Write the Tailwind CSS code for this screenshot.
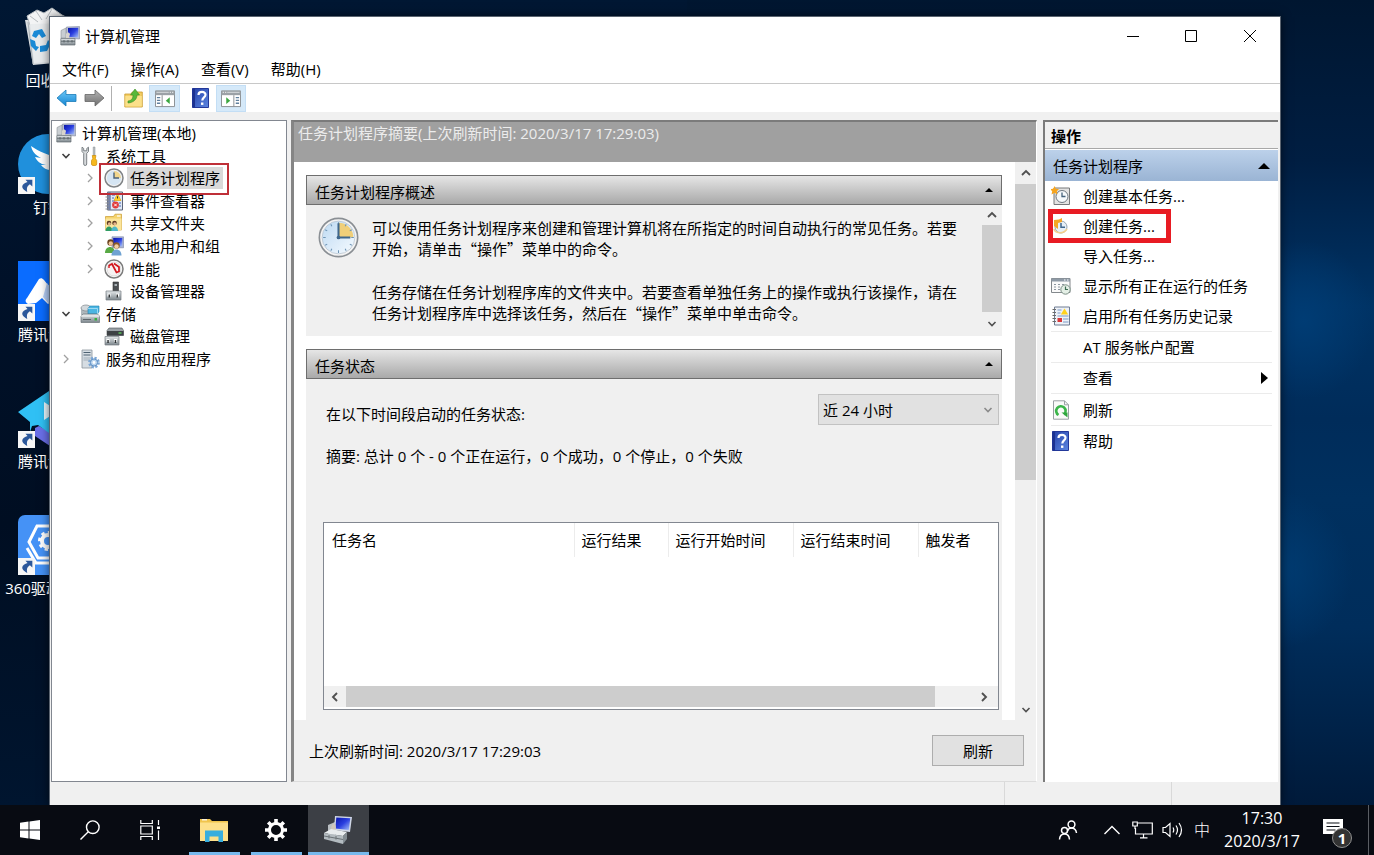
<!DOCTYPE html>
<html lang="zh-CN">
<head>
<meta charset="utf-8">
<title>计算机管理</title>
<script src="https://cdn.jsdelivr.net/npm/@tailwindcss/browser@4"></script>
</head>
<body class="flex h-screen flex-col overflow-hidden bg-[#001127] font-['Open_Sans','Noto_Sans_CJK_SC',sans-serif] text-[15px] leading-[22px] text-black">

<!-- Shared icon symbols -->
<svg class="absolute h-0 w-0" aria-hidden="true">
  <defs>
    <linearGradient id="gScreen" x1="0" y1="0" x2="1" y2="1"><stop offset="0" stop-color="#0a14a8"/><stop offset=".5" stop-color="#2a3fe0"/><stop offset="1" stop-color="#a9c4f8"/></linearGradient>
    <linearGradient id="gMetal" x1="0" y1="0" x2="0" y2="1"><stop offset="0" stop-color="#e4e8ea"/><stop offset="1" stop-color="#7c868c"/></linearGradient>
    <linearGradient id="gBlue" x1="0" y1="0" x2="0" y2="1"><stop offset="0" stop-color="#6cc8f8"/><stop offset="1" stop-color="#1485d2"/></linearGradient>
    <linearGradient id="gGray" x1="0" y1="0" x2="0" y2="1"><stop offset="0" stop-color="#b4b4b4"/><stop offset="1" stop-color="#6e6e6e"/></linearGradient>
    <linearGradient id="gFace" x1="0" y1="0" x2="1" y2="1"><stop offset="0" stop-color="#bcd9f2"/><stop offset="1" stop-color="#f6fbff"/></linearGradient>
    <linearGradient id="gHelp" x1="0" y1="0" x2="1" y2="1"><stop offset="0" stop-color="#2440a8"/><stop offset="1" stop-color="#5c86e0"/></linearGradient>
  </defs>
  <symbol id="mmc" viewBox="0 0 20 20">
    <path d="M1 4.500L6 2v10H1z" fill="#c9ced2" stroke="#8b9297" stroke-width=".6"/>
    <path d="M6.500 1L19.500.5v12.500L6.500 12z" fill="#b9bfd0" stroke="#8088a0" stroke-width=".6"/>
    <path d="M8 2l10.300-.3v9.800L8 10.700z" fill="url(#gScreen)"/>
    <path d="M6 8c1-2 3-2 4 0l-1 4H6z" fill="#d8d4cc"/>
    <path d="M.8 12.500h14.200V19H.8z" fill="url(#gMetal)" stroke="#666e74" stroke-width=".7"/>
    <path d="M1 15.200h14M4 14v2.500M8 14v2.500M12 14v2.500" stroke="#555d63" stroke-width=".9"/>
  </symbol>
  <symbol id="tools" viewBox="0 0 20 20">
    <path d="M2 1.200v4.300l1.700 1.800V18a1.500 1.500 0 0 0 3 0V7.300L8.500 5.500V1.200L6.800 2.400v2.400H3.700V2.400z" fill="#d7dadc" stroke="#70777c" stroke-width=".9"/>
    <path d="M13.200 1h1.800v9h-1.800z" fill="#b9bec2" stroke="#868c90" stroke-width=".5"/>
    <path d="M12.300 9.500h3.600l-.5 3 1.300 2V18a1.500 1.500 0 0 1-1.500 1.500h-2.300A1.500 1.500 0 0 1 11.500 18v-3.500l1.300-2z" fill="#f6b81e" stroke="#c98b07" stroke-width=".7"/>
  </symbol>
  <symbol id="clock" viewBox="0 0 40 40">
    <circle cx="20" cy="20" r="18.700" fill="#f4f4f4" stroke="#8a8f94" stroke-width="1.600"/>
    <circle cx="20" cy="20" r="16" fill="url(#gFace)" stroke="#b6c2cc" stroke-width=".7"/>
    <path d="M20 20V5.500A14.500 14.500 0 0 1 34.500 20z" fill="#f0cf79"/>
    <path d="M20 5v2.500M20 32.500V35M5 20h2.500M32.500 20H35M12.500 7l1 2M27.500 7l-1 2M7 12.500l2 1M7 27.500l2-1M12.500 33l1-2M27.500 33l-1-2M33 27.500l-2-1M33 12.500l-2 1" stroke="#6e94b4" stroke-width="1"/>
    <path d="M20 6v14h11.500" fill="none" stroke="#3f678c" stroke-width="2"/>
    <circle cx="20" cy="20" r="1.800" fill="#3f678c"/>
  </symbol>
  <symbol id="clockS" viewBox="0 0 20 20">
    <circle cx="10" cy="10" r="9" fill="#f2f2f2" stroke="#808487" stroke-width="1.500"/>
    <circle cx="10" cy="10" r="7.200" fill="#d5e5f3"/>
    <path d="M10 10V3a7 7 0 0 1 7 7z" fill="#f2d68c"/>
    <path d="M10 4.500V10h5" fill="none" stroke="#4d6378" stroke-width="1.400"/>
  </symbol>
  <symbol id="events" viewBox="0 0 20 20">
    <path d="M3.500 1h15v18h-15z" fill="#dfe8f6" stroke="#5c6478"/>
    <path d="M3.500 1h3.300v18H3.500z" fill="#7482a8"/>
    <path d="M1.500 3h3.500M1.500 6h3.500M1.500 9h3.500M1.500 12h3.500M1.500 15h3.500M1.500 18h3.500" stroke="#8d8d8d" stroke-width="1.200"/>
    <path d="M8 4h3M8 7h2M8 10h3M15 12h2M15 15h2" stroke="#4b69b0"/>
    <path d="M13.500 3l3.500 6.500h-7z" fill="#ffd324" stroke="#d89c00" stroke-width=".6"/>
    <path d="M13.500 5.300v2.200" stroke="#333"/>
    <circle cx="11.500" cy="14" r="3.400" fill="#e0393a"/><path d="M10.200 12.700l2.600 2.600m0-2.600l-2.600 2.600" stroke="#fff"/>
  </symbol>
  <symbol id="shared" viewBox="0 0 20 20">
    <path d="M1.500 3.500h8l1.500-2.300h6.500V17h-16z" fill="#f5d36c" stroke="#c89b2e" stroke-width=".7"/>
    <path d="M1.500 5.500h16V17h-16z" fill="#fbe59c"/>
    <path d="M13 3h3.500" stroke="#fff" stroke-width="1.200"/>
    <circle cx="5" cy="10" r="2.300" fill="#5b3b22"/><circle cx="5.400" cy="10.700" r="1.500" fill="#e4b48b"/>
    <circle cx="10.500" cy="10" r="2.300" fill="#5b3b22"/><circle cx="10.800" cy="10.700" r="1.500" fill="#e4b48b"/>
    <path d="M1.500 18c0-6 7-6 7 0z" fill="#2f9c63"/><path d="M7.300 18c0-6 6.700-6 6.700 0z" fill="#4fb8c8"/>
  </symbol>
  <symbol id="users" viewBox="0 0 20 20">
    <path d="M8 .8h11.500v11H8z" fill="#aab3cf" stroke="#7984a8" stroke-width=".6"/><path d="M9.200 2h9.100v8.300H9.200z" fill="url(#gScreen)"/>
    <circle cx="6.500" cy="6.500" r="3.200" fill="#6a421f"/><circle cx="6.800" cy="7.500" r="2.200" fill="#edc194"/>
    <path d="M1 17c0-8 10-8 10 0z" fill="#58a944"/>
    <circle cx="12.500" cy="9.500" r="3.200" fill="#8a5a28"/><circle cx="12.500" cy="10.500" r="2.200" fill="#f2cda2"/>
    <path d="M7.500 19.500c0-8 10-8 10 0z" fill="#6fa2d2"/>
  </symbol>
  <symbol id="perf" viewBox="0 0 20 20">
    <circle cx="10" cy="10" r="9" fill="#fff" stroke="#7c7c7c" stroke-width="1.500"/>
    <circle cx="10" cy="10" r="7" fill="#f6f2f2" stroke="#c9c9c9" stroke-width=".6"/>
    <path d="M5 6.500l3-1.500 4.500 8.500 2.500-1V8L10 4.500" fill="none" stroke="#d3151c" stroke-width="1.700"/><path d="M5 9V6" stroke="#d3151c" stroke-width="1.400"/>
  </symbol>
  <symbol id="device" viewBox="0 0 20 20">
    <path d="M9 1h5.500v9H9z" fill="#4b4f52" stroke="#333" stroke-width=".6"/><path d="M10.500 3h2.500v2h-2.500z" fill="#a8b0b4"/>
    <path d="M2 10h15v9H2z" fill="url(#gMetal)" stroke="#767d82" stroke-width=".7"/>
    <path d="M3.500 12.500h3v3h-3zM12 12.500h3v3h-3z" fill="#fff"/><path d="M4.500 13.500h1.500v3H4.500zM12.500 13.500H14v3h-1.500z" fill="#303436"/>
  </symbol>
  <symbol id="storage" viewBox="0 0 20 20">
    <path d="M1 4v7h10V4z" fill="#aeb7bc"/><ellipse cx="6" cy="4" rx="5" ry="3" fill="#d2d8dc" stroke="#7f878c" stroke-width=".7"/>
    <path d="M8 4.500L10 2h9v5.500L17.500 10H8z" fill="#4bb5e2" stroke="#1c7fae" stroke-width=".6"/><path d="M8 4.500h9.500V10" fill="none" stroke="#bfe8fa" stroke-width=".7"/>
    <path d="M1 12l2-2h14.500l2 2v6.500H1z" fill="url(#gMetal)" stroke="#6c7479" stroke-width=".7"/><path d="M1 12h18.500" stroke="#f3f5f6"/>
    <path d="M14.500 14h2.500v2.500h-2.500z" fill="#36b042"/><path d="M3 15.500h8" stroke="#5d656a"/>
  </symbol>
  <symbol id="disk" viewBox="0 0 20 20">
    <path d="M3 4.500L5 2h13l1.500 2.500v5H3z" fill="#9aa1a6" stroke="#4a5054" stroke-width=".6"/><path d="M3 5h16.500v4.500H3z" fill="#3d4144"/><path d="M14.500 7h3" stroke="#62e05e" stroke-width="1.200"/>
    <path d="M1 10.500h14V19H1z" fill="url(#gMetal)" stroke="#767d82" stroke-width=".7"/>
    <path d="M2.500 13h3v3h-3zM10 13h3v3h-3z" fill="#fff"/><path d="M3.300 14h1.500v3H3.300zM10.700 14h1.500v3h-1.500z" fill="#303436"/>
  </symbol>
  <symbol id="services" viewBox="0 0 20 20">
    <path d="M2 1h10v18H2z" fill="#d6dde3" stroke="#8a949c" stroke-width=".8"/>
    <path d="M3.500 3.500h7M3.500 6h7" stroke="#4e6272" stroke-width="1.200"/><path d="M3.500 9h7M3.500 11h7" stroke="#a3afb9"/>
    <circle cx="14" cy="13.500" r="4.600" fill="none" stroke="#7ba7d6" stroke-width="2.600" stroke-dasharray="2.100 1.500"/>
    <circle cx="14" cy="13.500" r="3.600" fill="#b9d4ee" stroke="#5f8fc4"/><circle cx="14" cy="13.500" r="1.400" fill="#fff"/>
  </symbol>
  <symbol id="help" viewBox="0 0 20 20">
    <path d="M1.500.5h16v19h-16z" fill="url(#gHelp)" stroke="#23389a"/><path d="M1.500.5H4v19H1.500z" fill="#1c3190"/>
    <path d="M7.500 7c0-4 7-4 7-.3 0 2.800-3.200 2.600-3.200 5.800" fill="none" stroke="#fff" stroke-width="2.200"/><path d="M10 14.500h2.400v2.400H10z" fill="#fff"/>
  </symbol>
  <symbol id="panel" viewBox="0 0 22 20">
    <path d="M1 2h20v16.500H1z" fill="#fff" stroke="#8a8e92"/><path d="M1 2h20v4.500H1z" fill="#9ba1a6"/><path d="M2 3.500h13" stroke="#d9dcde"/><path d="M16 3.500h1.200M18.500 3.500h1.200" stroke="#fff"/>
    <path d="M2.500 9h3.500M2.500 12h3.500M2.500 15h3.500" stroke="#5f7f9d" stroke-width="1.400"/>
    <path d="M8 6.500v12" stroke="#8a8e92"/><path d="M16 8.800v7L11.800 12.300z" fill="#3ca640"/>
  </symbol>
  <symbol id="chevR" viewBox="0 0 8 12"><path d="M2 2l4 4-4 4" fill="none" stroke="currentColor" stroke-width="1.300"/></symbol>
  <symbol id="chevRB" viewBox="0 0 8 12"><path d="M2 2l4 4-4 4" fill="none" stroke="currentColor" stroke-width="1.900"/></symbol>
  <symbol id="chevD" viewBox="0 0 12 8"><path d="M2.500 2L6 5.500 9.500 2" fill="none" stroke="currentColor" stroke-width="1.600"/></symbol>
  <symbol id="chevU" viewBox="0 0 12 8"><path d="M2 6l4-4 4 4" fill="none" stroke="currentColor" stroke-width="1.800"/></symbol>
  <symbol id="shortcut" viewBox="0 0 16 16"><path d="M0 0h16v16H0z" fill="#f6f6f6"/><path d="M7 2.500h6.500V9l-2.300-2.200C8.500 8.500 8 10.500 8.700 14c-2-1-4.700-2.500-4.700-5 0-2 2.500-3.600 5-4.300z" fill="#2b579a"/></symbol>
</svg>

<!-- Desktop -->
<main class="relative min-h-0 flex-1 overflow-hidden bg-[linear-gradient(180deg,#001630_0%,#001e42_20%,#003365_38%,#002c5a_52%,#00305f_62%,#002d5b_78%,#001a3a_100%)]">
  <div class="absolute inset-y-0 left-0 w-1/2 bg-[linear-gradient(180deg,#001733_0%,#001129_35%,#000e22_65%,#00152f_100%)]"></div>
  <div class="absolute top-[240px] right-0 h-[160px] w-[140px] bg-[radial-gradient(ellipse,#003c74_0%,#003c7400_70%)]"></div>
  <div class="absolute top-[490px] right-[20px] h-[160px] w-[160px] bg-[radial-gradient(ellipse,#003d74_0%,#003d7400_70%)]"></div>

  <!-- Desktop shortcuts -->
  <ul class="absolute top-[7px] left-0 w-24 text-center text-white">
    <li class="h-[127px]">
      <svg class="mx-auto h-[60px] w-[60px]" viewBox="0 0 60 60" aria-hidden="true">
        <path d="M7 13l46-2-6 44-32 3z" fill="#d9dde0"/>
        <path d="M9 9l10-6 7 3 8-5 10 7 8 4-4 6H12z" fill="#f3f4f5" stroke="#b9bec2"/>
        <path d="M18 4l6 9M34 2l-6 10M12 9l8 6" stroke="#b7bcc0"/>
        <path d="M10 15l5 42" stroke="#a9b0b5"/><path d="M12 17l38-1-5 38-29 2z" fill="#e9ecee"/>
        <path d="M16 24l8-2 4 7-4 2-3-4-3 4-4-2z" fill="#1a8ad6"/><path d="M12 32l5 2 1 5 3 1-3 4-5-5z" fill="#1a8ad6"/><path d="M22 39l6-1 2-5 3 3-4 8-7 1z" fill="#1a8ad6"/>
      </svg>
      <span class="mt-[2px] block">回收站</span>
    </li>
    <li class="h-[127px]">
      <svg class="mx-auto h-[60px] w-[60px]" viewBox="0 0 60 60" aria-hidden="true">
        <circle cx="30" cy="30" r="30" fill="#2090dc"/>
        <path d="M13 12c8 6 18 9 30 13-2 9-7 13-12 20l2-9c-4 0-8-2-10-5h5c-6-1-9-4-11-8l6 1c-6-3-9-7-10-12z" fill="#fff"/>
        <use href="#shortcut" x="0" y="43" width="17" height="17"/>
      </svg>
      <span class="mt-[2px] block">钉钉</span>
    </li>
    <li class="h-[127px]">
      <svg class="mx-auto h-[60px] w-[60px]" viewBox="0 0 60 60" aria-hidden="true">
        <path d="M0 0h60v60H0z" fill="#0a6cff"/>
        <path d="M21 18c2-1 3-1 5 1l12 15-8 9-6-6-6 5-8 1c-3-2-3-4-1-6z" fill="#fff"/><path d="M25 36l6 7 7-9-9-12z" fill="#b5cff8"/>
        <use href="#shortcut" x="0" y="43" width="17" height="17"/>
      </svg>
      <span class="mt-[2px] block">腾讯会议</span>
    </li>
    <li class="h-[127px]">
      <svg class="mx-auto h-[60px] w-[60px]" viewBox="0 0 60 60" aria-hidden="true">
        <path d="M17 40l4-2 14 8 14-10v9L32 58 17 48z" fill="#6a6fe8"/>
        <path d="M0 24L31 3l29 21-16 13-13 8-11-8-6 1-2 6v-10z" fill="#30c0f4"/>
        <path d="M26 14l14 9-14 9z" fill="#eaf8fe"/>
        <use href="#shortcut" x="0" y="43" width="17" height="17"/>
      </svg>
      <span class="mt-[2px] block">腾讯课堂</span>
    </li>
    <li class="h-[127px]">
      <svg class="mx-auto h-[60px] w-[60px]" viewBox="0 0 60 60" aria-hidden="true">
        <rect width="60" height="60" rx="7" fill="#4592f6"/>
        <path d="M11 27L19 11h22l8 16-8 16H20z" fill="none" stroke="#fff" stroke-width="3"/><path d="M9 33l9 15h24l9-15" fill="none" stroke="#fff" stroke-width="3"/>
        <circle cx="30" cy="26" r="6" fill="none" stroke="#fff" stroke-width="4"/><circle cx="30" cy="26" r="8.500" fill="none" stroke="#fff" stroke-width="3" stroke-dasharray="3.300 3.300"/>
        <use href="#shortcut" x="0" y="43" width="17" height="17"/>
      </svg>
      <span class="mt-[2px] block whitespace-nowrap">360驱动大师</span>
    </li>
  </ul>

  <!-- Computer Management window -->
  <section class="absolute top-[17px] right-[94px] bottom-0 left-[50px] flex flex-col bg-[#f0f0f0] shadow-[0_0_0_1px_#5a6470,0_0_10px_#000000b0]">
    <header class="flex h-[37px] shrink-0 items-center bg-white pl-[10px]">
      <svg class="h-5 w-5" aria-hidden="true"><use href="#mmc"/></svg>
      <h1 class="ml-[5px] flex-1">计算机管理</h1>
      <button aria-label="最小化" class="flex h-full w-[58px] items-center justify-center"><svg class="h-3 w-3" viewBox="0 0 12 12"><path d="M0 6.500h12" stroke="#000"/></svg></button>
      <button aria-label="最大化" class="flex h-full w-[58px] items-center justify-center"><svg class="h-3 w-3" viewBox="0 0 12 12"><path d="M.5.5h11v11H.5z" fill="none" stroke="#000"/></svg></button>
      <button aria-label="关闭" class="flex h-full w-[60px] items-center justify-center"><svg class="h-3 w-3" viewBox="0 0 12 12"><path d="M0 0l12 12M12 0L0 12" stroke="#000"/></svg></button>
    </header>
    <nav class="flex h-[30px] shrink-0 items-center border-b border-[#c8c8c8] bg-white pl-px">
      <button class="px-[11px]">文件(F)</button>
      <button class="px-[11px]">操作(A)</button>
      <button class="px-[11px]">查看(V)</button>
      <button class="px-[11px]">帮助(H)</button>
    </nav>
    <div class="flex h-[28px] shrink-0 items-center bg-white pl-[6px]">
      <button aria-label="后退" class="mr-[7px]"><svg class="h-[18px] w-[21px]" viewBox="0 0 21 18"><path d="M1 9l9-8v4.500h10v7H10V17z" fill="url(#gBlue)" stroke="#1b7bb8" stroke-width=".8"/></svg></button>
      <button aria-label="前进"><svg class="h-[18px] w-[21px]" viewBox="0 0 21 18"><path d="M20 9l-9-8v4.500H1v7h10V17z" fill="url(#gGray)" stroke="#666" stroke-width=".8"/></svg></button>
      <span class="mx-[6px] h-[25px] w-px bg-[#b0b0b0]"></span>
      <button aria-label="向上" class="mx-[6px]"><svg class="h-[20px] w-[19px]" viewBox="0 0 19 20"><path d="M.8 6h6l1.500-2h10v15H.8z" fill="#f3cd62" stroke="#c99a2f" stroke-width=".8"/><path d="M1.300 8h16.500v10.500H1.300z" fill="#fbe08a"/><path d="M4 13c4-.5 5-3 5-6H6.500L11 1l4.500 6H13c0 4-3 7.500-9 8z" fill="#58b83a" stroke="#3a8f22" stroke-width=".6"/></svg></button>
      <button aria-label="显示/隐藏控制台树" class="flex h-[27px] w-[31px] items-center justify-center border border-[#c3def5] bg-[#d5e9f9]"><svg class="h-[19px] w-[22px]"><use href="#panel"/></svg></button>
      <button aria-label="帮助" class="mr-[5px] ml-[11px]"><svg class="h-[20px] w-[20px]"><use href="#help"/></svg></button>
      <button aria-label="显示/隐藏操作窗格" class="flex h-[27px] w-[30px] items-center justify-center border border-[#c3def5] bg-[#d5e9f9]"><svg class="h-[19px] w-[22px] -scale-x-100"><use href="#panel"/></svg></button>
    </div>

    <div class="flex min-h-0 flex-1 pt-2 pr-[2px] pl-px">
      <!-- Console tree -->
      <aside class="relative w-[236px] shrink-0 border border-[#828790] bg-white">
        <ul class="grid h-[249px] auto-rows-fr pt-px">
          <li class="flex items-center gap-[6px] pl-1"><svg class="h-5 w-5"><use href="#mmc"/></svg><span>计算机管理(本地)</span></li>
          <li class="flex items-center gap-[6px] pl-[6px]"><svg class="h-2 w-4 text-[#404040]"><use href="#chevD"/></svg><svg class="h-5 w-5"><use href="#tools"/></svg><span>系统工具</span></li>
          <li class="flex items-center gap-[6px] pl-[30px]"><svg class="h-3 w-4 text-[#a0a0a0]"><use href="#chevR"/></svg><svg class="h-5 w-5"><use href="#clockS"/></svg><span class="-mx-[3px] bg-[#d9d9d9] px-[3px]">任务计划程序</span></li>
          <li class="flex items-center gap-[6px] pl-[30px]"><svg class="h-3 w-4 text-[#a0a0a0]"><use href="#chevR"/></svg><svg class="h-5 w-5"><use href="#events"/></svg><span>事件查看器</span></li>
          <li class="flex items-center gap-[6px] pl-[30px]"><svg class="h-3 w-4 text-[#a0a0a0]"><use href="#chevR"/></svg><svg class="h-5 w-5"><use href="#shared"/></svg><span>共享文件夹</span></li>
          <li class="flex items-center gap-[6px] pl-[30px]"><svg class="h-3 w-4 text-[#a0a0a0]"><use href="#chevR"/></svg><svg class="h-5 w-5"><use href="#users"/></svg><span>本地用户和组</span></li>
          <li class="flex items-center gap-[6px] pl-[30px]"><svg class="h-3 w-4 text-[#a0a0a0]"><use href="#chevR"/></svg><svg class="h-5 w-5"><use href="#perf"/></svg><span>性能</span></li>
          <li class="flex items-center gap-[6px] pl-[52px]"><svg class="h-5 w-5"><use href="#device"/></svg><span>设备管理器</span></li>
          <li class="flex items-center gap-[6px] pl-[6px]"><svg class="h-2 w-4 text-[#404040]"><use href="#chevD"/></svg><svg class="h-5 w-5"><use href="#storage"/></svg><span>存储</span></li>
          <li class="flex items-center gap-[6px] pl-[52px]"><svg class="h-5 w-5"><use href="#disk"/></svg><span>磁盘管理</span></li>
          <li class="flex items-center gap-[6px] pl-[6px]"><svg class="h-3 w-4 text-[#a0a0a0]"><use href="#chevR"/></svg><svg class="h-5 w-5"><use href="#services"/></svg><span>服务和应用程序</span></li>
        </ul>
        <div class="absolute top-[42px] left-[47px] h-[32px] w-[130px] border-2 border-[#bf2f38]"></div>
      </aside>

      <!-- Task Scheduler summary -->
      <section class="ml-1 flex min-w-0 flex-1 flex-col border-t-2 border-r border-b border-l-[3px] border-t-[#7b7b7b] border-r-white border-b-[#dcdcdc] border-l-[#858585]">
        <h2 class="h-10 shrink-0 bg-[#a0a0a0] pl-1 text-[#ececec]">任务计划程序摘要(上次刷新时间: 2020/3/17 17:29:03)</h2>
        <div class="flex min-h-0 flex-1">
          <div class="flex min-w-0 flex-1 flex-col bg-white pt-[13px] pr-[13px] pl-3">
            <h3 class="flex h-[30px] shrink-0 items-center justify-between border border-[#6e6e6e] bg-linear-to-b from-[#e6e6e6] to-[#a9a9a9] pt-1 pr-2 pl-2">任务计划程序概述<svg class="mb-1 h-1 w-2" viewBox="0 0 8 4"><path d="M0 4l4-4 4 4z"/></svg></h3>
            <div class="flex h-[131px] shrink-0 bg-[#f0f0f0] pl-3">
              <svg class="mt-3 h-[41px] w-[41px] shrink-0"><use href="#clock"/></svg>
              <div class="min-w-0 flex-1 overflow-hidden pt-3 pr-4 pl-[13px] font-['Noto_Sans_CJK_SC',sans-serif] leading-[21px]">
                <p>可以使用任务计划程序来创建和管理计算机将在所指定的时间自动执行的常见任务。若要开始，请单击“操作”菜单中的命令。</p>
                <p class="mt-[22px]">任务存储在任务计划程序库的文件夹中。若要查看单独任务上的操作或执行该操作，请在任务计划程序库中选择该任务，然后在“操作”菜单中单击命令。</p>
              </div>
              <div class="flex w-5 shrink-0 flex-col items-center text-[#505050]">
                <svg class="my-[6px] h-2 w-3 shrink-0"><use href="#chevU"/></svg>
                <div class="w-full flex-1 bg-[#cdcdcd]"></div>
                <svg class="my-[8px] h-2 w-3 shrink-0"><use href="#chevD"/></svg>
              </div>
            </div>
            <h3 class="mt-[13px] flex h-[30px] shrink-0 items-center justify-between border border-[#6e6e6e] bg-linear-to-b from-[#e6e6e6] to-[#a9a9a9] pt-1 pr-2 pl-2">任务状态<svg class="mb-1 h-1 w-2" viewBox="0 0 8 4"><path d="M0 4l4-4 4 4z"/></svg></h3>
            <div class="flex min-h-0 flex-1 flex-col bg-[#f0f0f0] pt-[15px] pr-[3px] pb-[10px] pl-[17px]">
              <div class="flex items-end justify-between pl-[3px]">
                <label for="period">在以下时间段启动的任务状态:</label>
                <div class="relative">
                  <select id="period" class="h-[31px] w-[181px] appearance-none rounded-none border border-[#c2c2c2] bg-[#e1e1e1] pl-1 leading-[22px]"><option>近 24 小时</option></select>
                  <svg class="pointer-events-none absolute top-3 right-[5px] h-2 w-3 text-[#8a8a8a]"><use href="#chevD"/></svg>
                </div>
              </div>
              <p class="mt-[20px] pl-[3px]">摘要: 总计 0 个 - 0 个正在运行，0 个成功，0 个停止，0 个失败</p>
              <div class="mt-[55px] flex min-h-0 flex-1 flex-col border border-[#828790] bg-white">
                <table class="w-full table-fixed text-left">
                  <thead><tr class="h-[34px]">
                    <th class="w-[250px] border-r border-[#ececec] pl-[8px] font-normal">任务名</th>
                    <th class="w-[94px] border-r border-[#ececec] pl-[7px] font-normal">运行结果</th>
                    <th class="w-[125px] border-r border-[#ececec] pl-[7px] font-normal">运行开始时间</th>
                    <th class="w-[125px] border-r border-[#ececec] pl-[7px] font-normal">运行结束时间</th>
                    <th class="pl-[7px] font-normal">触发者</th>
                  </tr></thead>
                </table>
                <div class="mt-auto mb-[2px] flex h-[21px] items-center bg-[#f0f0f0] text-[#505050]">
                  <svg class="mx-[7px] h-3 w-2 -scale-x-100"><use href="#chevRB"/></svg>
                  <div class="h-full flex-1"><div class="h-full w-[94%] bg-[#cdcdcd]"></div></div>
                  <svg class="mr-[10px] ml-[7px] h-3 w-2"><use href="#chevRB"/></svg>
                </div>
              </div>
            </div>
          </div>
          <div class="flex w-[21px] shrink-0 flex-col items-center bg-[#f0f0f0] text-[#505050]">
            <svg class="my-[7px] h-2 w-3 shrink-0"><use href="#chevU"/></svg>
            <div class="h-[53%] w-full bg-[#cdcdcd]"></div>
            <svg class="mt-auto mb-[6px] h-2 w-3 shrink-0"><use href="#chevD"/></svg>
          </div>
        </div>
        <footer class="flex h-[61px] shrink-0 items-center justify-between pr-3 pl-[15px]">
          <span>上次刷新时间: 2020/3/17 17:29:03</span>
          <button class="h-[31px] w-[92px] border border-[#adadad] bg-[#e1e1e1]">刷新</button>
        </footer>
      </section>

      <!-- Actions pane -->
      <aside class="relative ml-[6px] flex w-[235px] shrink-0 flex-col border-t-2 border-l-2 border-[#7b7b7b] bg-white">
        <h2 class="flex h-[27px] shrink-0 items-center border-b border-[#a8a8a8] bg-[#f0f0f0] pt-[2px] pl-[6px] font-bold">操作</h2>
        <h3 class="mt-px flex h-[31px] shrink-0 items-center justify-between bg-linear-to-b from-[#bcd1ea] to-[#9ab4d4] pr-2 pl-2">任务计划程序<svg class="h-[6px] w-3" viewBox="0 0 12 6"><path d="M0 6l6-6 6 6z"/></svg></h3>
        <div class="flex flex-col pr-[6px] pl-[6px]">
          <button class="flex h-[30px] items-center gap-3 text-left"><svg class="h-5 w-5" viewBox="0 0 20 20"><path d="M3 2h15.500v16.500H3z" fill="#e3e3e3" stroke="#77797b"/><circle cx="11" cy="10.500" r="6" fill="#f5f9fc" stroke="#6d7780"/><path d="M11 6.500v4h3.500" fill="none" stroke="#44627c" stroke-width="1.300"/><path d="M3.500 0l1.300 2.800L8 3 5.800 5.200 6.500 8.500 3.500 6.800.5 8.500 1.200 5.200-1 3l3.200-.2z" fill="#f7a51d"/></svg>创建基本任务...</button>
          <button class="flex h-[30px] items-center gap-3 text-left"><svg class="h-5 w-5" viewBox="0 0 20 20"><circle cx="10" cy="11" r="6" fill="#e6eff7" stroke="#94a3b0"/><path d="M10 7v4.200h4" fill="none" stroke="#3f678c" stroke-width="1.500"/><path d="M3 4l5-.5 3-1.500v4l-4 1v6L3 10z" fill="#f5a623"/><path d="M3 13c1 4 9 6 13 0" fill="none" stroke="#f3cf8c" stroke-width="1.500"/></svg>创建任务...</button>
          <button class="h-[30px] pl-8 text-left">导入任务...</button>
          <button class="flex h-[30px] items-center gap-3 text-left"><svg class="h-5 w-5" viewBox="0 0 20 20"><path d="M.5 2.500h18.500v14H.5z" fill="#fafafa" stroke="#83888c"/><path d="M.5 2.500h18.500v3H.5z" fill="#8e9aa6"/><path d="M13 4h1.500M16 4h1.500" stroke="#fff"/><path d="M3 8.500h2m2 0h2m2 0h2M3 11h2m2 0h2M3 13.500h2m2 0h2" stroke="#8d97a0" stroke-width="1.200"/><circle cx="14.500" cy="13.500" r="4.700" fill="#e4efe6" stroke="#7b8f85"/><path d="M14.500 10.500v3h2.500" fill="none" stroke="#3d6d53" stroke-width="1.200"/></svg>显示所有正在运行的任务</button>
          <button class="flex h-[30px] items-center gap-3 text-left"><svg class="h-5 w-5" viewBox="0 0 20 20"><path d="M3.500 1h15v18h-15z" fill="#eef2f8" stroke="#6f7c92"/><path d="M1.500 3.500H5M1.500 6.500H5M1.500 9.500H5M1.500 12.500H5M1.500 15.500H5" stroke="#6a6a6a" stroke-width="1.100"/><path d="M6.500 4h4M6.500 7h3M6.500 10h11M12 13h5.500M12 16h5.500" stroke="#7d9ac8"/><path d="M13.500 2.500l3.700 6H9.800z" fill="#ffd21f"/><path d="M6.500 12h4.500v4H6.500z" fill="#d8383a"/></svg>启用所有任务历史记录</button>
          <button class="h-8 border-y border-[#ebebeb] pl-8 text-left">AT 服务帐户配置</button>
          <button class="flex h-[30px] items-center justify-between pr-1 pl-8">查看<svg class="h-3 w-[7px]" viewBox="0 0 7 12"><path d="M0 0l7 6-7 6z"/></svg></button>
          <button class="flex h-[33px] items-center gap-3 border-y border-[#ebebeb] text-left"><svg class="h-5 w-5" viewBox="0 0 20 20"><path d="M2.500.8h11l4 4v14.400h-15z" fill="#fafafa" stroke="#9aa0a4"/><path d="M13.500.8v4h4" fill="none" stroke="#9aa0a4"/><path d="M7.500 15A4.700 4.700 0 1 1 13 14.500" fill="none" stroke="#3bb54a" stroke-width="2.600"/><path d="M10.500 12.500h6v5z" fill="#2fa53e"/></svg>刷新</button>
          <button class="flex h-[30px] items-center gap-3 text-left"><svg class="h-5 w-5"><use href="#help"/></svg>帮助</button>
        </div>
        <div class="absolute top-[87px] left-[3px] h-[34px] w-[123px] border-[5px] border-[#e81b23]"></div>
      </aside>
    </div>

    <footer class="flex h-[23px] shrink-0 justify-end">
      <span class="w-[167px] border-l border-[#d9d9d9]"></span>
      <span class="w-[109px] border-l border-[#d9d9d9]"></span>
    </footer>
  </section>
</main>

<!-- Taskbar -->
<footer class="flex h-[50px] shrink-0 items-stretch bg-[#080b12] text-white">
  <button aria-label="开始" class="flex w-[60px] items-center justify-center"><svg class="h-5 w-5" viewBox="0 0 20 20" fill="#fff"><path d="M0 2.800l8.500-1.200v7.900H0zM9.500 1.400L20 0v9.500H9.500zM0 10.500h8.500v7.900L0 17.200zM9.500 10.500H20V20L9.500 18.600z"/></svg></button>
  <button aria-label="搜索" class="flex w-[60px] items-center justify-center"><svg class="h-5 w-5" viewBox="0 0 20 20" fill="none" stroke="#fff" stroke-width="1.400"><circle cx="12.800" cy="7.200" r="6.300"/><path d="M8.300 11.700L.5 19.500"/></svg></button>
  <button aria-label="任务视图" class="flex w-[60px] items-center justify-center"><svg class="h-5 w-5" viewBox="0 0 20 20" fill="none" stroke="#fff" stroke-width="1.200"><path d="M.8 0v3.500h11.500V0M.8 20v-3.500h11.500V20M.8 6h11.500v8H.8zM18.500 0v5M18.500 10.500V20"/><path d="M17 6.500h3v2.500h-3z" fill="#fff" stroke="none"/></svg></button>
  <button aria-label="文件资源管理器" class="ml-[9px] flex w-[51px] items-center justify-center border-b-[3px] border-[#76b9ed] pt-[3px] pr-[2px]"><svg class="h-6 w-7" viewBox="0 0 28 24"><path d="M0 1h10l2 2h16v20H0z" fill="#f0c44c"/><path d="M0 4.500h28V23H0z" fill="#fde08a"/><path d="M2 1.800h5" stroke="#fff" stroke-width="1.200"/><path d="M5 12.500h18V24h-4.500v-5.500h-9V24H5z" fill="#39aedd"/></svg></button>
  <button aria-label="设置" class="ml-[11px] flex w-[51px] items-center justify-center border-b-[3px] border-[#76b9ed] pt-[3px] pr-[2px]"><svg class="h-[22px] w-[22px]" viewBox="0 0 22 22" fill="none" stroke="#fff"><circle cx="11" cy="11" r="6.500" stroke-width="3"/><path d="M11 0v4M11 18v4M0 11h4M18 11h4M3.200 3.200L6 6M16 16l2.800 2.800M18.800 3.200L16 6M6 16l-2.800 2.800" stroke-width="3.600"/></svg></button>
  <button aria-label="计算机管理" class="ml-[6px] flex w-[61px] items-center justify-center border-b-[3px] border-[#76b9ed] bg-[#3c3f45] pt-[3px] pr-[2px]"><svg class="h-[30px] w-[30px]" viewBox="0 0 30 30"><path d="M5 10l7-3v13H5z" fill="#b9bec2"/><path d="M12 1l17 1-2 15-16-2z" fill="#cfd6e6"/><path d="M13.300 2.500l14 .8-1.500 11.800-13.400-1.500z" fill="url(#gScreen)"/><path d="M8 14c1-7 4-7 5-2l-1 8z" fill="#cfc7bb"/><path d="M1 18l7-4 16 3-4 4z" fill="#e8ecee"/><path d="M1 18l19 3v8L1 24z" fill="#b3bbc0"/><path d="M20 21l4-4v7l-4 5z" fill="#838c92"/><path d="M1 21l19 3.500M6 20v3.500M13 21v3.500" stroke="#6a7277"/></svg></button>

  <div class="ml-auto flex items-center">
    <button aria-label="人脉" class="mr-[26px]"><svg class="h-5 w-5" viewBox="0 0 20 20" fill="none" stroke="#fff" stroke-width="1.500"><circle cx="13.500" cy="4.500" r="3.400"/><path d="M9.500 11c1.500-4.500 8-4 9 2"/><circle cx="6.500" cy="10.500" r="3"/><path d="M1.500 19.500c.5-7.500 9.500-7.500 10 0"/></svg></button>
    <button aria-label="显示隐藏的图标" class="mr-3"><svg class="h-[10px] w-4" viewBox="0 0 16 10" fill="none" stroke="#fff" stroke-width="1.400"><path d="M.5 9L8 1.500 15.500 9"/></svg></button>
    <button aria-label="网络" class="mr-[9px]"><svg class="h-[18px] w-[21px]" viewBox="0 0 21 18" fill="none" stroke="#fff" stroke-width="1.200"><path d="M6 2h14.300v11H3.500V7"/><path d="M11.500 13v3.500M8 16.800h7.500M.8 1h4.500v4H.8zM3 5v3"/></svg></button>
    <button aria-label="音量" class="mr-[11px]"><svg class="h-[18px] w-[21px]" viewBox="0 0 21 18" fill="none" stroke="#fff" stroke-width="1.200"><path d="M1 6.500h2.500L8 2.500v13l-4.500-4H1z"/><path d="M11 6.500q1.500 2.500 0 5M14 4.500q3 4.500 0 9M17 2q5 7 0 14"/></svg></button>
    <button class="mr-[13px] text-base font-light">中</button>
    <button class="w-[78px] text-center text-base leading-[23px]"><time class="block">17:30</time><time class="block">2020/3/17</time></button>
    <button aria-label="通知" class="relative mr-[15px] ml-[22px]"><svg class="h-[30px] w-[30px]" viewBox="0 0 30 30"><path d="M0 4h20v15h-5v4l-4-4H0z" fill="#fff"/><path d="M3.500 8h13M3.500 11.500h13M3.500 15h9" stroke="#0b0e14" stroke-width="1.200"/></svg>
      <span class="absolute top-[13px] left-[9px] h-5 w-5 rounded-full border border-[#8f8f8f] bg-[#333] text-center leading-[18px] font-bold">1</span></button>
    <span class="mr-[5px] h-[50px] w-px bg-[#5a5d63]"></span>
  </div>
</footer>
</body>
</html>
